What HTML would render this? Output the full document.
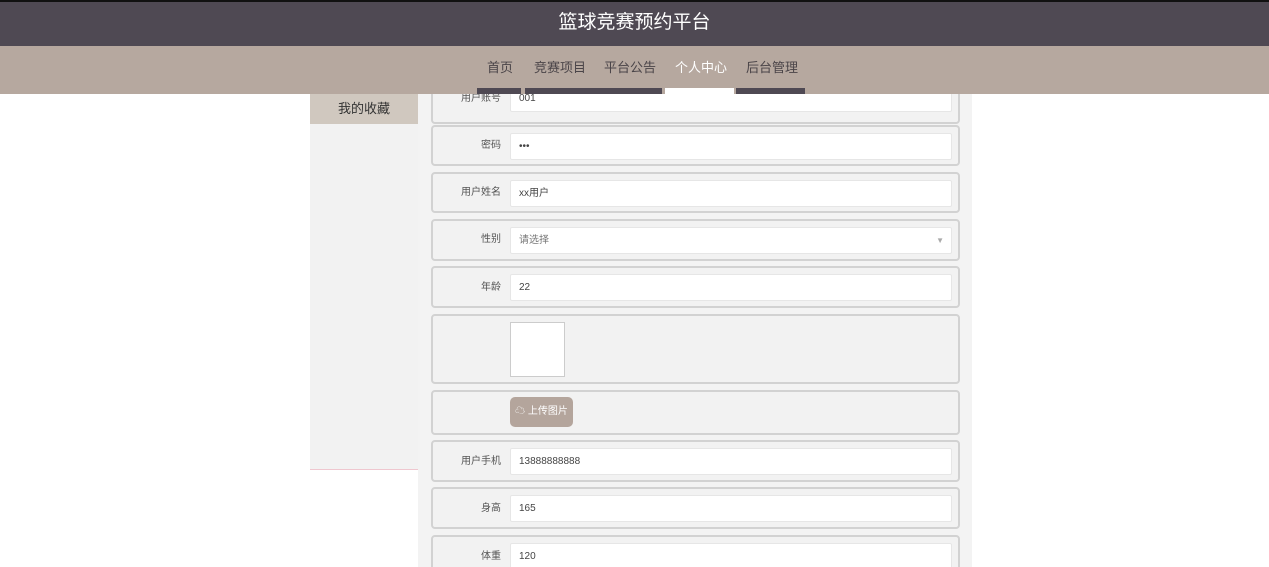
<!DOCTYPE html>
<html><head><meta charset="utf-8"><style>
*{margin:0;padding:0;box-sizing:border-box}
html,body{width:1269px;height:567px;overflow:hidden}
body{background:#fff;font-family:"Liberation Sans","Noto Sans CJK SC",sans-serif;position:relative}
.a{position:absolute}
.row{position:absolute;left:431px;width:529px;background:#f2f2f2;border:2px solid #d2d2d2;border-radius:4px}
.lbl{position:absolute;right:457px;font-size:10px;color:#555;text-align:right;white-space:nowrap;line-height:12px}
.inp{position:absolute;left:77px;width:442px;height:27px;background:#fff;border:1px solid #e6e6e6;border-radius:2px;font-size:10px;color:#444;padding-left:8px;line-height:25px}
.top{z-index:5}
</style></head><body>
<div class="a" style="left:310px;top:94px;width:108px;height:376px;background:#f2f2f2;border-bottom:1px solid #efc7cf"></div>
<div class="a" style="left:310px;top:94px;width:108px;height:30px;background:#d0c8bf;font-size:13px;color:#333;text-align:center;line-height:30px">我的收藏</div>
<div class="a" style="left:418px;top:94px;width:554px;height:473px;background:#f3f3f3"></div>

<div class="row" style="top:78px;height:46px"><div class="lbl" style="top:13px">用户账号</div><div class="inp" style="top:5px">001</div></div>
<div class="row" style="top:125px;height:41px"><div class="lbl" style="top:13px">密码</div><div class="inp" style="top:6px">•••</div></div>
<div class="row" style="top:172px;height:41px"><div class="lbl" style="top:13px">用户姓名</div><div class="inp" style="top:6px">xx用户</div></div>
<div class="row" style="top:219px;height:42px"><div class="lbl" style="top:13px">性别</div><div class="inp" style="top:6px;color:#777">请选择<span style="position:absolute;right:7px;top:0;font-size:8px;color:#aaa">▼</span></div></div>
<div class="row" style="top:266px;height:42px"><div class="lbl" style="top:14px">年龄</div><div class="inp" style="top:6px">22</div></div>
<div class="row" style="top:314px;height:70px"><div class="a" style="left:77px;top:6px;width:55px;height:55px;background:#fff;border:1px solid #ccc"></div></div>
<div class="row" style="top:390px;height:45px"><div class="a" style="left:77px;top:5px;width:63px;height:30px;background:#b4a59c;border-radius:5px;color:#fff;font-size:10px;line-height:30px;text-align:center">☁ 上传图片</div></div>
<div class="row" style="top:440px;height:42px"><div class="lbl" style="top:14px">用户手机</div><div class="inp" style="top:6px">13888888888</div></div>
<div class="row" style="top:487px;height:42px"><div class="lbl" style="top:14px">身高</div><div class="inp" style="top:6px">165</div></div>
<div class="row" style="top:535px;height:42px"><div class="lbl" style="top:14px">体重</div><div class="inp" style="top:6px">120</div></div>

<div class="a top" style="left:0;top:0;width:1269px;height:2px;background:#111"></div>
<div class="a top" style="left:0;top:2px;width:1269px;height:44px;background:#4f4953;color:#fff;font-size:19px;text-align:center;line-height:42px">篮球竞赛预约平台</div>
<div class="a top" style="left:0;top:46px;width:1269px;height:42px;background:#b6a89f"></div>
<div class="a top" style="left:0;top:88px;width:477px;height:6px;background:#b6a89f"></div>
<div class="a top" style="left:805px;top:88px;width:464px;height:6px;background:#b6a89f"></div>
<div class="a top" style="left:521px;top:88px;width:4px;height:6px;background:#b6a89f"></div>
<div class="a top" style="left:662px;top:88px;width:3px;height:6px;background:#b6a89f"></div>
<div class="a top" style="left:734px;top:88px;width:2px;height:6px;background:#b6a89f"></div>
<div class="a top" style="left:487px;top:57px;font-size:13px;color:#4a4448">首页</div>
<div class="a top" style="left:534px;top:57px;font-size:13px;color:#4a4448">竞赛项目</div>
<div class="a top" style="left:604px;top:57px;font-size:13px;color:#4a4448">平台公告</div>
<div class="a top" style="left:675px;top:57px;font-size:13px;color:#fff">个人中心</div>
<div class="a top" style="left:746px;top:57px;font-size:13px;color:#4a4448">后台管理</div>
<div class="a top" style="left:477px;top:88px;width:44px;height:6px;background:#4f4953"></div>
<div class="a top" style="left:525px;top:88px;width:137px;height:6px;background:#4f4953"></div>
<div class="a top" style="left:665px;top:88px;width:69px;height:6px;background:#fff"></div>
<div class="a top" style="left:736px;top:88px;width:69px;height:6px;background:#4f4953"></div>
</body></html>
